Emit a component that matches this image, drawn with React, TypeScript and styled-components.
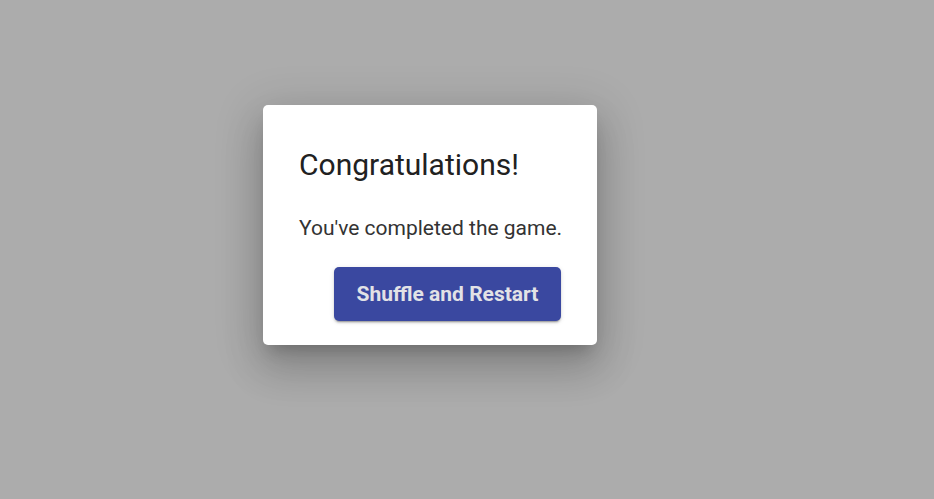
import React from 'react'
import styled, { createGlobalStyle } from 'styled-components'

const GlobalStyle = createGlobalStyle`
  html, body {
    margin: 0;
    padding: 0;
    background: #acacac;
    font-family: Roboto, "Liberation Sans", sans-serif;
  }
`

const Backdrop = styled.div`
  width: 100vw;
  height: 100vh;
  background: #acacac;
  overflow: hidden;
`

const Stage = styled.div`
  width: 860px;
  height: 450px;
  display: flex;
  align-items: center;
  justify-content: center;
`

const Dialog = styled.div`
  width: 334px;
  box-sizing: border-box;
  padding: 41px 36px 24px;
  background: #fff;
  border-radius: 5px;
  box-shadow: 0 11px 15px -7px rgba(0, 0, 0, 0.2),
    0 24px 38px 3px rgba(0, 0, 0, 0.14), 0 9px 46px 8px rgba(0, 0, 0, 0.12);
  display: flex;
  flex-direction: column;
`

const Title = styled.h2`
  margin: 0;
  font-size: 30px;
  font-weight: 400;
  line-height: 38px;
  color: #212121;
`

const Message = styled.p`
  margin: 30px 0 0;
  font-size: 21px;
  line-height: 28px;
  color: #333;
  white-space: nowrap;
`

const Actions = styled.div`
  display: flex;
  justify-content: flex-end;
  margin-top: 25px;
`

const PrimaryButton = styled.button`
  width: 227px;
  height: 54px;
  border: none;
  border-radius: 5px;
  background: #3a48a0;
  color: #e2e2e6;
  font-family: Roboto, "Liberation Sans", sans-serif;
  font-size: 21px;
  font-weight: 700;
  cursor: pointer;
  box-shadow: 0 3px 1px -2px rgba(0, 0, 0, 0.2), 0 2px 2px 0 rgba(0, 0, 0, 0.14),
    0 1px 5px 0 rgba(0, 0, 0, 0.12);
`

const App = () => {
  return (
    <>
      <GlobalStyle />
      <Backdrop>
        <Stage>
          <Dialog>
            <Title>Congratulations!</Title>
            <Message>You've completed the game.</Message>
            <Actions>
              <PrimaryButton>Shuffle and Restart</PrimaryButton>
            </Actions>
          </Dialog>
        </Stage>
      </Backdrop>
    </>
  )
}

export default App
